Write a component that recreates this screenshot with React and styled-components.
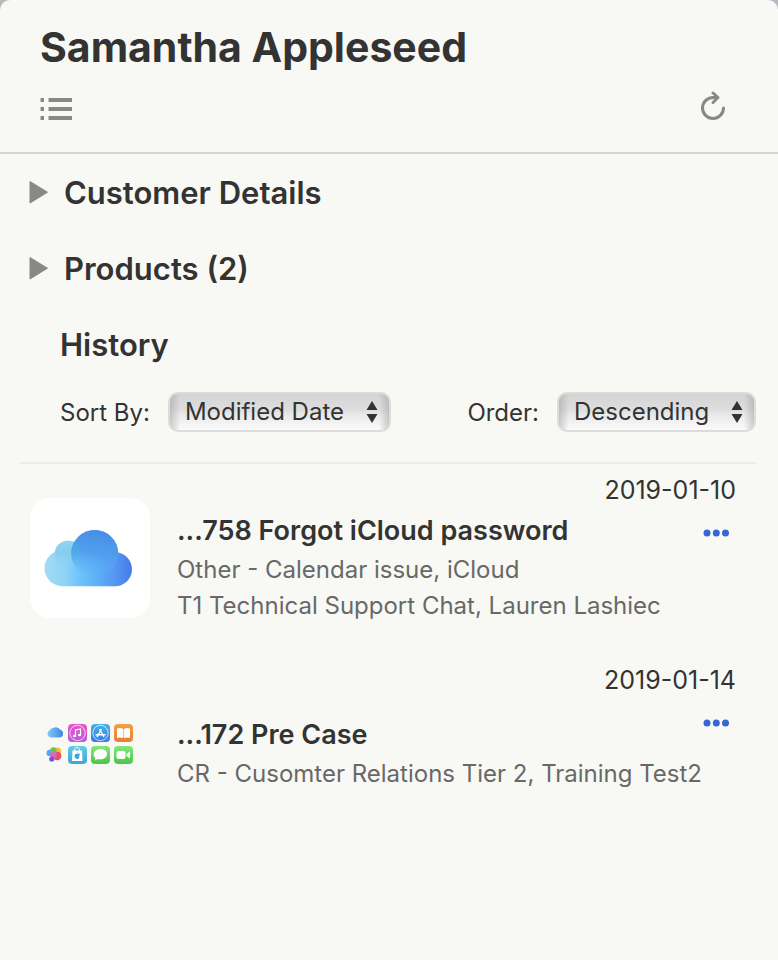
import React from "react";
import styled, { createGlobalStyle } from "styled-components";

const GlobalStyle = createGlobalStyle`
  *, *::before, *::after { box-sizing: border-box; }
  body {
    margin: 0;
    background: #b9b9be;
    color: #333;
    font-family: Inter, "Liberation Sans", sans-serif;
    font-size: 24px;
  }
`;

const Panel = styled.main`
  min-height: 100vh;
  background: #f8f9f4;
  border-radius: 10px 10px 0 0;
`;

const Header = styled.header`
  padding: 20px 48px 26px 40px;
  border-bottom: 2px solid #d4d4d4;
`;

const Name = styled.h1`
  margin: 0;
  font-size: 41px;
  line-height: 54px;
  font-weight: 700;
  white-space: nowrap;
`;

const Toolbar = styled.div`
  display: flex;
  align-items: center;
  justify-content: space-between;
  margin-top: 12px;
  height: 40px;
`;

const IconButton = styled.button`
  display: flex;
  padding: 0;
  border: 0;
  background: none;
  color: #888;
  cursor: pointer;
`;

const Sections = styled.div`
  padding: 1px 22px 0 28px;
`;

const Disclosure = styled.button`
  display: flex;
  align-items: center;
  gap: 15px;
  width: 100%;
  height: 76px;
  padding: 0;
  border: 0;
  background: none;
  color: #333;
  font: inherit;
  text-align: left;
  cursor: pointer;
`;

const SectionTitle = styled.span`
  font-size: 31px;
  line-height: 40px;
  font-weight: 600;
`;

const HistoryTitle = styled.h2`
  margin: 0;
  padding-left: 32px;
  font-size: 31px;
  line-height: 76px;
  font-weight: 600;
`;

const Controls = styled.div`
  display: flex;
  justify-content: space-between;
  margin: 9px 22px 30px 60px;
`;

const Field = styled.label`
  display: flex;
  align-items: center;
  gap: 18px;
  white-space: nowrap;
`;

const SelectFrame = styled.span`
  display: grid;
  align-items: center;
  width: ${(p) => p.$width}px;
  height: 40px;
  border: 2px solid #dcdcdc;
  border-radius: 10px;
  background:
    linear-gradient(90deg, rgba(150, 150, 150, 0.45), transparent 10px, transparent calc(100% - 10px), rgba(150, 150, 150, 0.45)),
    linear-gradient(#d4d4d4, #dfdfdf 48%, #e6e6e6 52%, #fbfbfb);

  > * { grid-area: 1 / 1; }
  > svg { justify-self: end; margin-right: 11px; pointer-events: none; }
`;

const Select = styled.select`
  appearance: none;
  align-self: start;
  width: 100%;
  height: 34px;
  padding: 0 36px 0 15px;
  border: 0;
  border-radius: 8px;
  background: transparent;
  color: #333;
  font: inherit;
`;

const HistoryList = styled.ul`
  list-style: none;
  margin: 0 22px 0 20px;
  padding: 0;
  border-top: 2px solid #ebece8;
`;

const Item = styled.li`
  display: grid;
  grid-template-columns: 120px 1fr;
  grid-template-rows: auto 1fr;
  column-gap: 27px;
  min-height: 190px;
  padding: 0 20px 0 10px;
`;

const Artwork = styled.div`
  grid-row: 1 / 3;
  display: flex;
  align-items: center;
  justify-content: center;
  align-self: start;
  height: ${(p) => (p.$plain ? 112 : 120)}px;
  margin-top: 34px;
  border-radius: 20px;
  background: ${(p) => (p.$plain ? "transparent" : "#fff")};
`;

const DateText = styled.time`
  padding-top: 10px;
  font-size: 25px;
  line-height: 32px;
  text-align: right;
`;

const ItemBody = styled.div`
  display: flex;
  justify-content: space-between;
  align-items: flex-start;
  min-width: 0;
`;

const ItemText = styled.div`
  flex: 1;
  min-width: 0;
  padding-top: ${(p) => (p.$low ? 21 : 7)}px;
  white-space: nowrap;
`;

const ItemTitle = styled.h3`
  margin: 0 0 3px;
  font-size: 27px;
  line-height: 36px;
  font-weight: 600;
`;

const Detail = styled.p`
  margin: 0;
  line-height: 36px;
  color: #686868;
`;

const MoreButton = styled(IconButton)`
  margin: 16px 6px 0 0;
  color: #3566d6;
`;

const ListIcon = () => (
  <svg width="33" height="30" viewBox="0 -6 33 30" fill="currentColor" aria-hidden="true">
    <path d="M0.5 1h3.5v4h-3.5zM8.500 1h23.500v4h-23.500zM0.500 10h3.500v4h-3.500zM8.500 10h23.500v4h-23.500zM0.500 19h3.500v4h-3.500zM8.500 19h23.500v4h-23.500z" />
  </svg>
);

const ReloadIcon = () => (
  <svg width="34" height="34" viewBox="0 0 34 34" fill="none" stroke="currentColor" strokeWidth="3" strokeLinecap="round" strokeLinejoin="round" aria-hidden="true">
    <path d="M27.500 19A10.500 10.500 0 1 1 17 8.500H22M17 4l5 4.500-5 5" />
  </svg>
);

const Triangle = () => (
  <svg width="21" height="24" viewBox="0 0 21 24" fill="#888" stroke="#888" strokeLinejoin="round" aria-hidden="true">
    <path d="M2 .5v21.500L19.500 11.200z" />
  </svg>
);

const StepperArrows = () => (
  <svg width="12" height="22" viewBox="0 0 12 22" fill="#333" aria-hidden="true">
    <path d="M6 0l5.500 9h-11zM.5 13h11l-5.500 9z" />
  </svg>
);

const Dots = () => (
  <svg width="27" height="22" viewBox="0 0 27 22" fill="currentColor" aria-hidden="true">
    <circle cx="4" cy="11" r="3.500" />
    <circle cx="13.300" cy="11" r="3.500" />
    <circle cx="22.500" cy="11" r="3.500" />
  </svg>
);

const CloudArt = () => (
  <svg width="92" height="58" viewBox="0 0 92 58" role="img" aria-label="iCloud">
    <defs>
      <linearGradient id="cloudBase" gradientUnits="userSpaceOnUse" x1="0" y1="0" x2="88" y2="0">
        <stop offset="0" stopColor="#a3dbf3" />
        <stop offset=".24" stopColor="#8ed3f6" />
        <stop offset=".38" stopColor="#72c6fa" />
        <stop offset=".58" stopColor="#5fb2f8" />
        <stop offset=".8" stopColor="#5597f2" />
        <stop offset="1" stopColor="#467ce9" />
      </linearGradient>
      <linearGradient id="cloudTop" gradientUnits="userSpaceOnUse" x1="54" y1="1" x2="48" y2="50">
        <stop offset="0" stopColor="#468ee6" />
        <stop offset=".5" stopColor="#4f9eed" stopOpacity=".9" />
        <stop offset="1" stopColor="#62b8f8" stopOpacity="0" />
      </linearGradient>
      <linearGradient id="cloudPuff" x1="0" y1="0" x2="0" y2="1">
        <stop offset="0" stopColor="#90d4ef" />
        <stop offset=".5" stopColor="#83ccef" stopOpacity=".8" />
        <stop offset="1" stopColor="#8ed3f6" stopOpacity="0" />
      </linearGradient>
      <linearGradient id="cloudLens" gradientUnits="userSpaceOnUse" x1="0" y1="11" x2="0" y2="38">
        <stop offset="0" stopColor="#3fa3e5" />
        <stop offset=".4" stopColor="#4aaae9" stopOpacity=".9" />
        <stop offset="1" stopColor="#63baf3" stopOpacity="0" />
      </linearGradient>
      <clipPath id="puffClip"><circle cx="24" cy="25" r="13.300" /></clipPath>
    </defs>
    <g fill="url(#cloudBase)">
      <circle cx="18.500" cy="39.200" r="18" />
      <circle cx="24" cy="25" r="13.300" />
      <circle cx="50.700" cy="24.500" r="23.500" />
      <circle cx="71" cy="40.200" r="17" />
      <path d="M18.500 35h52.500v22.200h-52.500z" />
    </g>
    <circle cx="24" cy="25" r="13.300" fill="url(#cloudPuff)" />
    <circle cx="50.700" cy="24.500" r="23.500" fill="url(#cloudTop)" />
    <circle cx="50.700" cy="24.500" r="23.500" fill="url(#cloudLens)" clipPath="url(#puffClip)" />
  </svg>
);

const AppsArt = () => (
  <svg width="88" height="42" viewBox="0 0 88 42" role="img" aria-label="Apple apps and services">
    <defs>
      <linearGradient id="miniCloud" x1="0" x2="1"><stop stopColor="#85caf3" /><stop offset=".55" stopColor="#58a8ee" /><stop offset="1" stopColor="#467ee2" /></linearGradient>
      <linearGradient id="musicFill" x1="0" y1="0" x2="0" y2="1"><stop stopColor="#e45ac8" /><stop offset="1" stopColor="#bd58dd" /></linearGradient>
      <linearGradient id="storeFill" x1="0" y1="0" x2="0" y2="1"><stop stopColor="#41b4ee" /><stop offset="1" stopColor="#397be2" /></linearGradient>
      <linearGradient id="booksFill" x1="0" y1="0" x2="0" y2="1"><stop stopColor="#f2a047" /><stop offset="1" stopColor="#ee7e2d" /></linearGradient>
      <linearGradient id="shopFill" x1="0" y1="0" x2="0" y2="1"><stop stopColor="#65cce8" /><stop offset="1" stopColor="#40a4dc" /></linearGradient>
      <linearGradient id="greenFill" x1="0" y1="0" x2="0" y2="1"><stop stopColor="#84e87a" /><stop offset="1" stopColor="#4fc34b" /></linearGradient>
    </defs>
    <path d="M4.500 14.500a4 4 0 0 1-.4-7.600A3.500 3.500 0 0 1 7.200 5 5.100 5.100 0 0 1 14.200 6.700 4 4 0 0 1 13.500 14.500z" fill="url(#miniCloud)" />
    <g opacity=".93">
      <circle cx="11.200" cy="28.500" r="4" fill="#f3bd25" />
      <circle cx="11.200" cy="33" r="4.200" fill="#ed3f62" />
      <circle cx="3.800" cy="30" r="3.300" fill="#42a6ef" />
      <circle cx="7.500" cy="27.500" r="3.200" fill="#65bc50" />
      <circle cx="7.500" cy="32" r="3.300" fill="#d95cba" />
      <circle cx="5.800" cy="36" r="2.600" fill="#654cdf" />
    </g>
    <rect x="22" y="1" width="19" height="18" rx="4" fill="url(#musicFill)" />
    <rect x="45" y="1" width="19" height="18" rx="4" fill="url(#storeFill)" />
    <rect x="68" y="1" width="19" height="18" rx="4" fill="url(#booksFill)" />
    <rect x="22" y="23" width="19" height="18" rx="4" fill="url(#shopFill)" />
    <rect x="45" y="23" width="19" height="18" rx="4" fill="url(#greenFill)" />
    <rect x="68" y="23" width="19" height="18" rx="4" fill="url(#greenFill)" />
    <g fill="none" stroke="#fff">
      <circle cx="31.500" cy="10" r="7.700" strokeOpacity=".7" />
      <path d="M29.500 13V7l5-1v6" strokeWidth="1.200" />
      <circle cx="54.500" cy="10" r="7.700" strokeOpacity=".7" />
      <path d="M51 14l4.500-8M53.500 6l4.500 8M49.500 11.700h10" strokeWidth="1.400" />
      <path d="M28.500 28v-1.500c0-2.500 5-2.500 5 0V28" />
    </g>
    <g fill="#fff">
      <ellipse cx="28.600" cy="13" rx="1.600" ry="1.300" />
      <ellipse cx="33.500" cy="12" rx="1.600" ry="1.300" />
      <path d="M71 5.500q3.500-1 6.200.5v9q-3-1-6.200 0zM84 5.500q-3.500-1-6.200.5v9q3-1 6.200 0z" />
      <path d="M26.500 27.500h9.500l.5 10.500h-10.500z" />
      <path d="M54.500 26c8.500 0 9 10 0 10.300-1.300 0-2 0-3-.3l-2.500 1.500.5-2.500c-4-3-1-9 5-9z" />
      <rect x="70.500" y="28" width="9" height="8" rx="2" />
      <path d="M80.500 31l3.500-2.500v7L80.500 33z" />
    </g>
    <path d="M31.200 31c3-1.400 3 .8 2 1.900.5 2-1 3.700-2 2.800-1.500.8-3-1.500-2.600-3.200.2-1.400 1.500-2 2.600-1.500zM31 30.500q0-1.500 1.500-2" fill="#3fa4dc" />
  </svg>
);

function Dropdown({ label, options, width }) {
  return (
    <Field>
      {label}
      <SelectFrame $width={width}>
        <Select>
          {options.map((option) => <option key={option}>{option}</option>)}
        </Select>
        <StepperArrows />
      </SelectFrame>
    </Field>
  );
}

const history = [
  {
    date: "2019-01-10",
    title: "...758 Forgot iCloud password",
    details: ["Other - Calendar issue, iCloud", "T1 Technical Support Chat, Lauren Lashiec"],
    art: <CloudArt />,
  },
  {
    date: "2019-01-14",
    title: "...172 Pre Case",
    details: ["CR - Cusomter Relations Tier 2, Training Test2"],
    art: <AppsArt />,
    plain: true,
  },
];

export default function App() {
  return (
    <>
      <GlobalStyle />
      <Panel>
        <Header>
          <Name>Samantha Appleseed</Name>
          <Toolbar>
            <IconButton type="button" aria-label="Show list"><ListIcon /></IconButton>
            <IconButton type="button" aria-label="Reload"><ReloadIcon /></IconButton>
          </Toolbar>
        </Header>
        <Sections>
          {["Customer Details", "Products (2)"].map((title) => (
            <Disclosure key={title} type="button" aria-expanded="false">
              <Triangle />
              <SectionTitle>{title}</SectionTitle>
            </Disclosure>
          ))}
          <HistoryTitle>History</HistoryTitle>
        </Sections>
        <Controls>
          <Dropdown label="Sort By:" options={["Modified Date", "Created Date"]} width={223} />
          <Dropdown label="Order:" options={["Descending", "Ascending"]} width={199} />
        </Controls>
        <HistoryList>
          {history.map((entry) => (
            <Item key={entry.title}>
              <Artwork $plain={entry.plain}>{entry.art}</Artwork>
              <DateText dateTime={entry.date}>{entry.date}</DateText>
              <ItemBody>
                <ItemText $low={entry.plain}>
                  <ItemTitle>{entry.title}</ItemTitle>
                  {entry.details.map((line) => <Detail key={line}>{line}</Detail>)}
                </ItemText>
                <MoreButton type="button" aria-label="More actions"><Dots /></MoreButton>
              </ItemBody>
            </Item>
          ))}
        </HistoryList>
      </Panel>
    </>
  );
}
